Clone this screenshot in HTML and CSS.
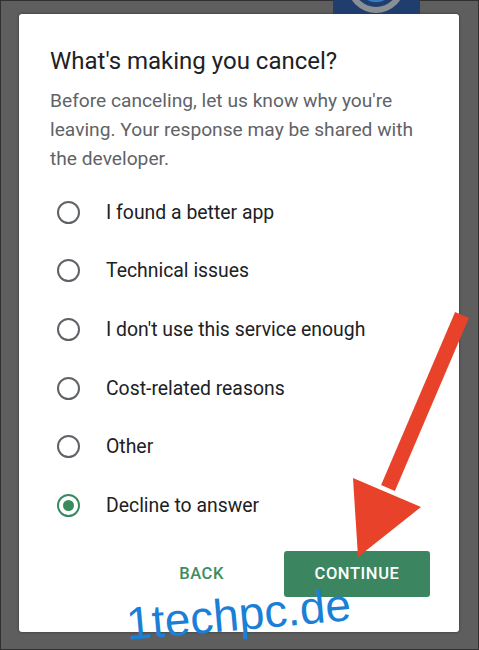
FILE: index.html
```html
<!DOCTYPE html>
<html lang="en">
<head>
    <title>Cancel subscription</title>
    <meta charset="UTF-8">
    <meta name="viewport" content="width=device-width, initial-scale=1.0">
    <link rel="stylesheet" href="styles.css">
</head>
<body>
    <div class="screen">
        <div class="app-strip">
            <svg class="app-icon" width="87" height="14" viewBox="0 0 87 14">
                <rect width="87" height="14" fill="#1f3d6d"/>
                <circle cx="43" cy="-16" r="29" fill="#8a8e95"/>
                <circle cx="43" cy="-16" r="23" fill="#1f3d6d"/>
                <circle cx="43" cy="-16" r="17" fill="none" stroke="#3b78c2" stroke-width="2.5"/>
            </svg>
        </div>

        <div class="dialog">
            <h1 class="dialog-title">What's making you cancel?</h1>
            <p class="dialog-text">Before canceling, let us know why you're leaving. Your response may be shared with the developer.</p>

            <ul class="options">
                <li class="option"><span class="radio"></span>I found a better app</li>
                <li class="option"><span class="radio"></span>Technical issues</li>
                <li class="option"><span class="radio"></span>I don't use this service enough</li>
                <li class="option"><span class="radio"></span>Cost-related reasons</li>
                <li class="option"><span class="radio"></span>Other</li>
                <li class="option checked"><span class="radio"></span>Decline to answer</li>
            </ul>

            <div class="actions">
                <button class="btn btn-text">BACK</button>
                <button class="btn btn-filled">CONTINUE</button>
            </div>
        </div>

        <!-- red pointer arrow drawn over the screenshot -->
        <svg class="pointer" width="479" height="650" viewBox="0 0 479 650">
            <line x1="462" y1="315" x2="388" y2="488" stroke="#e8432a" stroke-width="15"/>
            <polygon points="353,478 421,507 358,557" fill="#e8432a"/>
        </svg>

        <div class="watermark">1techpc.de</div>
    </div>
</body>
</html>
```

FILE: styles.css
```css
* {
    margin: 0;
    padding: 0;
    box-sizing: border-box;
}

body {
    font-family: Roboto, "Noto Sans", Arial, sans-serif;
    background-color: #5e5e5e;
}

.screen {
    position: relative;
    width: 479px;
    height: 650px;
    overflow: hidden;
    background-color: #5e5e5e;
    box-shadow: inset 0 0 0 1px #303030;
}

.app-strip {
    height: 14px;
    padding-left: 333px;
}

.app-icon {
    display: block;
}

.dialog {
    margin-left: 19px;
    width: 440px;
    height: 618px;
    background-color: #fff;
    border-radius: 3px;
    box-shadow: 0 0 3px rgba(0, 0, 0, 0.45);
    padding: 33px 29px 0 31px;
}

.dialog-title {
    font-size: 24px;
    font-weight: 400;
    line-height: 28px;
    color: #202124;
}

.dialog-text {
    margin-top: 11px;
    font-size: 19.2px;
    line-height: 29px;
    color: #5f6368;
}

.options {
    list-style: none;
    margin-top: 10px;
    margin-left: 7px;
}

.option {
    display: flex;
    align-items: center;
    gap: 26px;
    height: 58.6px;
    font-size: 19.4px;
    color: #202124;
}

.radio {
    flex-shrink: 0;
    width: 23px;
    height: 23px;
    border: 2.5px solid #5f6368;
    border-radius: 50%;
    display: flex;
    align-items: center;
    justify-content: center;
}

.option.checked .radio {
    border-color: #3b8a5e;
}

.option.checked .radio::after {
    content: "";
    width: 11px;
    height: 11px;
    border-radius: 50%;
    background-color: #3b8a5e;
}

.actions {
    display: flex;
    justify-content: flex-end;
    align-items: center;
    gap: 40px;
    margin-top: 16px;
}

.btn {
    font-family: Roboto, Arial, sans-serif;
    font-size: 16.5px;
    font-weight: 500;
    letter-spacing: 0.6px;
    height: 46px;
    border: none;
    border-radius: 3px;
    background: none;
}

.btn-text {
    color: #3d8c5f;
    padding: 0 20px;
}

.btn-filled {
    width: 146px;
    color: #fff;
    background-color: #3b8660;
}

.pointer {
    position: absolute;
    left: 0;
    top: 0;
}

.watermark {
    position: absolute;
    left: 126px;
    top: 591px;
    font-family: "Liberation Sans", Arial, sans-serif;
    font-size: 46px;
    line-height: 46px;
    color: #1a7fd6;
    transform: rotate(-5deg);
}
```
